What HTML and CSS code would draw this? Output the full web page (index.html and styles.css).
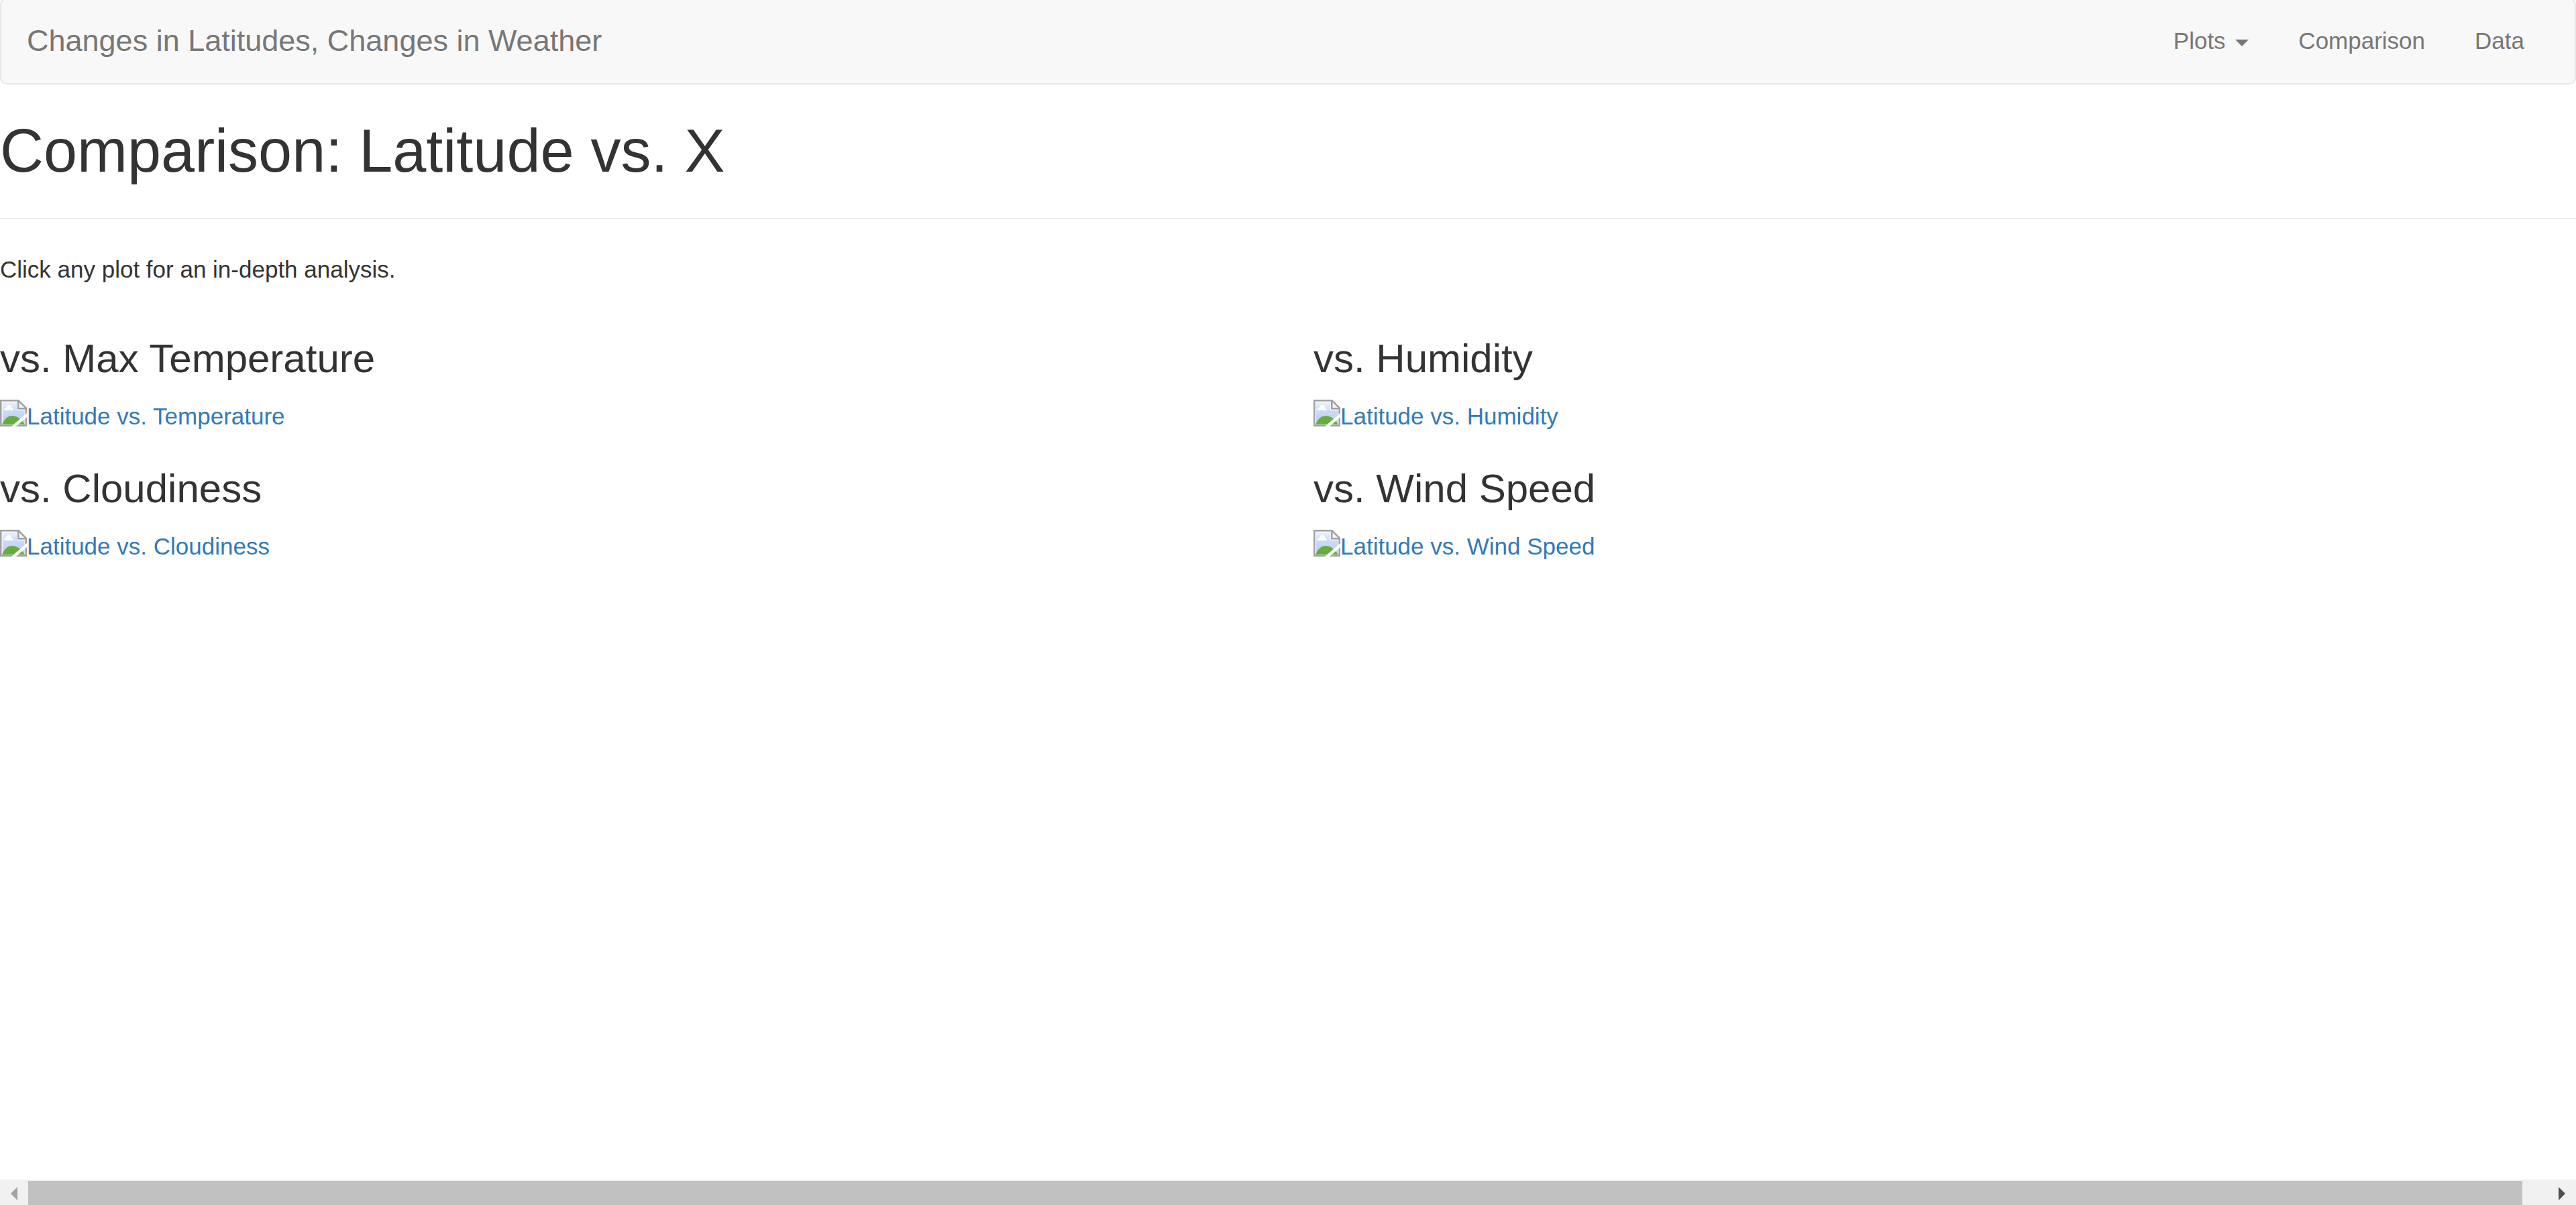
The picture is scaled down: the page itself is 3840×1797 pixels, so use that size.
FILE: index.html
```html
<!DOCTYPE html>
<html lang="en">
<head>
<meta charset="utf-8">
<title>Comparison: Latitude vs. X</title>
<link rel="stylesheet" href="styles.css">
</head>
<body>
<svg class="defs" aria-hidden="true">
  <defs>
    <linearGradient id="sky" x1="0" y1="0" x2="0" y2="1">
      <stop offset="0" stop-color="#eaf1fd"/>
      <stop offset="0.4" stop-color="#cadaf6"/>
      <stop offset="1" stop-color="#bccff0"/>
    </linearGradient>
    <symbol id="picture" viewBox="0 0 40 40">
      <path d="M0 0H28L40 12V40H0Z" fill="#a0a0a0"/>
      <path d="M2.5 2.5H26V14.5H37.5V37.5H2.5Z" fill="#f4f7fd"/>
      <path d="M4 4H25V16H36.500V37H4Z" fill="url(#sky)"/>
      <path d="M6 16Q5 12 9 12Q10 8 13 8Q17 8 17 12Q20 13 20 16Z" fill="#fff"/>
      <path d="M3 37Q8 24 18 24Q29 24 37 37Z" fill="#67ad3e"/>
      <path d="M28.500 4L36.500 12H28.500Z" fill="#f4f4f4"/>
      <path d="M40 20L17 40H24L40 26Z" fill="#fff"/>
    </symbol>
  </defs>
</svg>
<nav class="navbar">
  <a class="brand" href="#">Changes in Latitudes, Changes in Weather</a>
  <div class="links">
    <button class="nav-link" type="button">Plots <span class="caret"></span></button>
    <a class="nav-link" href="#">Comparison</a>
    <a class="nav-link" href="#">Data</a>
  </div>
</nav>
<main>
  <h1>Comparison: Latitude vs. X</h1>
  <hr>
  <p>Click any plot for an in-depth analysis.</p>
  <div class="plots">
    <section>
      <h3>vs. Max Temperature</h3>
      <a class="plot" href="#"><svg class="picture" aria-hidden="true"><use href="#picture"/></svg>Latitude vs. Temperature</a>
    </section>
    <section>
      <h3>vs. Humidity</h3>
      <a class="plot" href="#"><svg class="picture" aria-hidden="true"><use href="#picture"/></svg>Latitude vs. Humidity</a>
    </section>
    <section>
      <h3>vs. Cloudiness</h3>
      <a class="plot" href="#"><svg class="picture" aria-hidden="true"><use href="#picture"/></svg>Latitude vs. Cloudiness</a>
    </section>
    <section>
      <h3>vs. Wind Speed</h3>
      <a class="plot" href="#"><svg class="picture" aria-hidden="true"><use href="#picture"/></svg>Latitude vs. Wind Speed</a>
    </section>
  </div>
</main>
<div class="scrollbar">
  <button class="arrow" type="button" aria-label="Scroll left"><svg width="10" height="20" aria-hidden="true"><path d="M10 0V20L0 10Z" fill="#a3a3a3"/></svg></button>
  <div class="track"><div class="thumb"></div></div>
  <button class="arrow" type="button" aria-label="Scroll right"><svg width="10" height="20" aria-hidden="true"><path d="M0 0V20L10 10Z" fill="#505050"/></svg></button>
</div>
</body>
</html>
```
FILE: styles.css
```css
* {
  box-sizing: border-box;
}

body {
  display: flex;
  flex-direction: column;
  min-height: 100vh;
  margin: 0;
  padding: 0;
  background: #fff;
  color: #333;
  font-family: "Liberation Sans", Arial, sans-serif;
  font-size: 35px;
  line-height: 50px;
}

.defs {
  position: absolute;
  width: 0;
  height: 0;
}

a {
  color: #337ab7;
  text-decoration: none;
}

button {
  border: 0;
  background: none;
  font: inherit;
}

.navbar {
  display: flex;
  justify-content: space-between;
  margin: -3px 0 50px;
  padding: 37px 38px 38px;
  border: 2px solid #e7e7e7;
  border-radius: 10px;
  background: #f8f8f8;
}

.brand {
  color: #777;
  font-size: 45px;
}

.links {
  display: flex;
}

.nav-link {
  padding: 0 37px;
  color: #777;
}

.caret {
  display: inline-block;
  margin-left: 5px;
  border-top: 10px solid #777;
  border-right: 10px solid transparent;
  border-left: 10px solid transparent;
  vertical-align: middle;
}

h1,
h3 {
  margin: 0;
  font-weight: 500;
}

h1 {
  font-size: 90px;
  line-height: 99px;
}

h3 {
  margin-bottom: 25px;
  font-size: 60px;
  line-height: 66px;
}

hr {
  margin: 50px 0;
  border: 0;
  border-top: 2px solid #eee;
}

p {
  margin: 0 0 75px;
}

.plots {
  display: grid;
  grid-template-columns: 1fr 1fr;
  gap: 50px 76px;
  margin-bottom: 50px;
}

.plot {
  display: flex;
  align-items: flex-start;
  padding-top: 3px;
}

.picture {
  width: 40px;
  height: 40px;
}

.scrollbar {
  display: flex;
  height: 38px;
  margin-top: auto;
  background: #f1f1f1;
}

.arrow {
  display: flex;
  align-items: center;
  justify-content: center;
  width: 42px;
  padding: 4px 0 0;
}

.track {
  flex: 1;
  padding-top: 2px;
}

.thumb {
  width: 99%;
  height: 100%;
  background: #c1c1c1;
}
```
